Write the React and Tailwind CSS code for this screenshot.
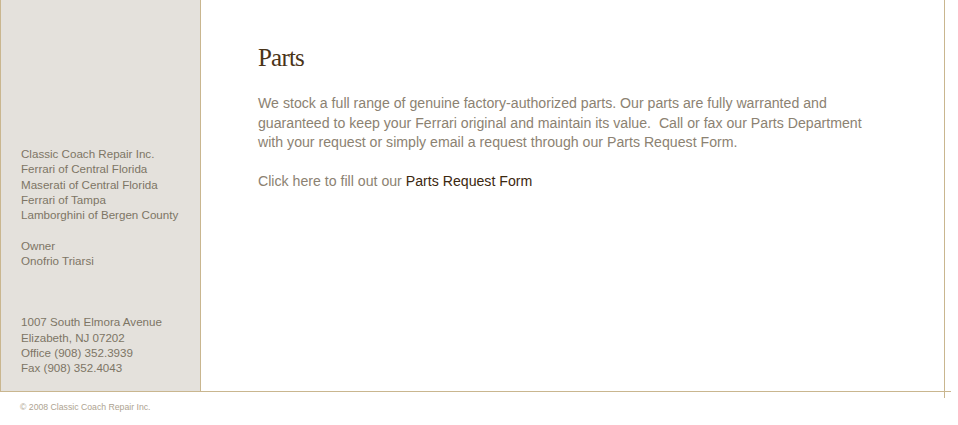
export default function App() {
  const sidebar = [
    'Classic Coach Repair Inc.',
    'Ferrari of Central Florida',
    'Maserati of Central Florida',
    'Ferrari of Tampa',
    'Lamborghini of Bergen County',
    '',
    'Owner',
    'Onofrio Triarsi',
    '',
    '',
    '',
    '1007 South Elmora Avenue',
    'Elizabeth, NJ 07202',
    'Office (908) 352.3939',
    'Fax (908) 352.4043',
  ]

  return (
    <div className="bg-white w-[958px] h-[425px] font-['Liberation_Sans',Arial,sans-serif]">
      {/* main frame */}
      <div className="flex w-[945px] h-[391px] border-l border-r border-[#c9b68f]">
        <div className="w-[200px] shrink-0 bg-[#e4e1dc] border-r border-[#c9b68f] pl-[20px] pt-[146px] text-[11.6px] leading-[15.3px] text-[#7d7565]">
          {sidebar.map((line, i) => (
            <div key={i} className="h-[15.3px] whitespace-nowrap">{line}</div>
          ))}
        </div>

        <div className="flex-1 pl-[57px] pt-[43px]">
          <h1 className="font-['Liberation_Serif',serif] text-[25px] leading-[30px] tracking-[-0.8px] text-[#4a3418]">Parts</h1>
          <p className="mt-[21px] w-[620px] text-[14.15px] leading-[19.5px] text-[#8c8272]">
            We stock a full range of genuine factory-authorized parts. Our parts are fully warranted and guaranteed to keep your Ferrari original and maintain its value.{'\u00a0 '}Call or fax our Parts Department with your request or simply email a request through our Parts Request Form.
          </p>
          <p className="mt-[19.5px] text-[14.15px] leading-[19.5px] text-[#8c8272]">
            Click here to fill out our <a href="#" className="text-[#3c2810]">Parts Request Form</a>
          </p>
        </div>
      </div>

      {/* bottom rule with the frame's overhang */}
      <div className="w-[951px] h-px bg-[#c9b68f]" />
      <div className="ml-[944px] w-px h-[6px] bg-[#c9b68f]" />

      <div className="pl-[20px] mt-[3px] text-[8.7px] leading-[12px] text-[#aea391]">
        © 2008 Classic Coach Repair Inc.
      </div>
    </div>
  )
}
